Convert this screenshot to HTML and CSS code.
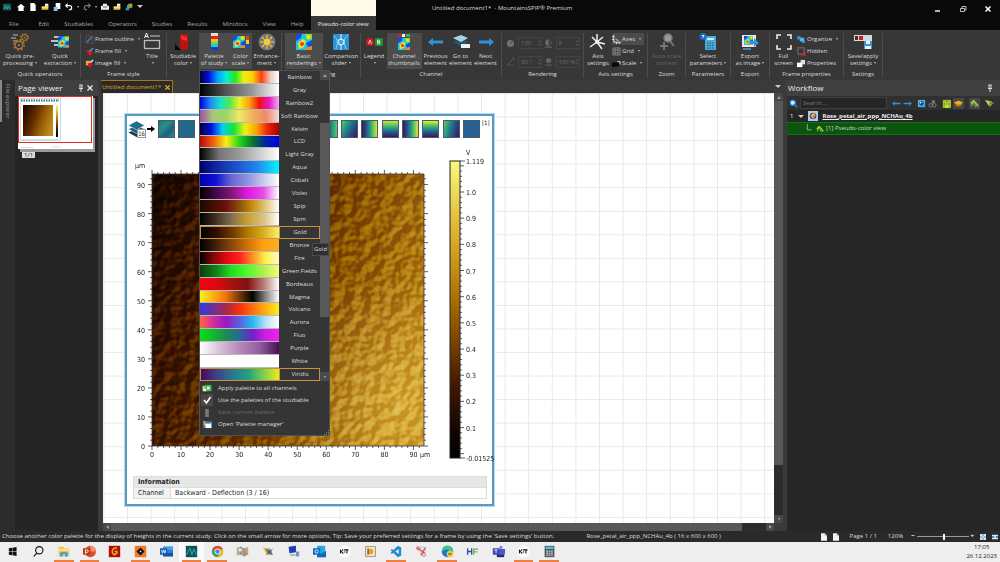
FILE: index.html
```html
<!DOCTYPE html>
<html lang="en">
<head>
<meta charset="utf-8">
<title>Untitled document1* - MountainsSPIP® Premium</title>
<link rel="stylesheet" href="styles.css">
</head>
<body>
<svg class="sprite" aria-hidden="true">
  <symbol id="heat" viewBox="0 0 16 16"><rect width="16" height="16" fill="#19c8e8"/><path d="M0 0h6l-1 4-5 3zM10 9l6-3v6l-4 1z" fill="#1b49e0"/><path d="M2 9l5-4 3 2-2 6-5 2z" fill="#f4e11e"/><path d="M9 0h7v5l-5 1z" fill="#7be03a"/><circle cx="6" cy="10" r="2" fill="#e8391d"/><circle cx="12.500" cy="3" r="2" fill="#f4e11e"/><path d="M10 14l6-2v4h-7z" fill="#f08a1c"/></symbol>
  <symbol id="gear" viewBox="0 0 16 16"><circle cx="8" cy="8" r="5" fill="none" stroke="#b07a28" stroke-width="1.800"/><circle cx="8" cy="8" r="7" fill="none" stroke="#b07a28" stroke-width="2" stroke-dasharray="2.500 3"/><circle cx="8" cy="8" r="1.500" fill="#b07a28"/></symbol>
  <symbol id="folder" viewBox="0 0 12 12"><path d="M1 5h4l1-1h5v6H1z" fill="#e8c440"/><path d="M1 6h10v1H1z" fill="#fff2a8"/><path d="M6 1h5v4H6z" fill="#eee"/></symbol>
  <symbol id="pin" viewBox="0 0 8 8"><path d="M2.500 1h3M3 1v3M5 1v3M2 4.500h4M4 4.500V8" stroke="#ddd" fill="none"/></symbol>
  <symbol id="larr" viewBox="0 0 16 10"><path d="M0 5l5-4v2.500h10v3H5V9z" fill="#2b93e0"/></symbol>
  <symbol id="rarr" viewBox="0 0 16 10"><path d="M16 5l-5-4v2.500H1v3h10V9z" fill="#2b93e0"/></symbol>
  <symbol id="page" viewBox="0 0 8 10"><path d="M0 0h5l3 3v7H0z" fill="#f4f4f4"/><path d="M5 0v3h3z" fill="#999"/></symbol>
  <symbol id="layers" viewBox="0 0 20 20"><path d="M1 14l9-4 9 4-9 5z" fill="#123c58"/><path d="M1 10l9-4 9 4-9 5z" fill="#175a78" stroke="#fff" stroke-width=".6"/><path d="M1 6l9-5 9 5-9 5z" fill="#1f6c88" stroke="#fff" stroke-width=".6"/></symbol>
  <symbol id="lens" viewBox="0 0 12 12"><circle cx="5" cy="5" r="3.500" fill="#d7ecff" stroke="#2b7cc8" stroke-width="1.500"/><path d="M8 8l3 3" stroke="#2b7cc8" stroke-width="2"/></symbol>
  <symbol id="measure" viewBox="0 0 10 10"><path d="M1 5l3-3 2 2 3 4" stroke="#e3d14a" stroke-width="1.500" fill="none"/><path d="M1 8l3-4 3 5" stroke="#58b84d" stroke-width="1.300" fill="none"/></symbol>
  <symbol id="kt" viewBox="0 0 16 16"><circle cx="8" cy="8" r="7.500" fill="#fff"/><path d="M3 5.500v5M4 8l2.500-2.500M4 8l2.500 2.500M7.500 6H13M11 6v4.500M7 8.500h2" stroke="#111" stroke-width="1.300" fill="none"/></symbol>
</svg>

<header class="titlebar">
  <div class="topline">
    <div class="quick">
      <svg viewBox="0 0 12 12"><rect y="1" width="12" height="10" fill="#0c5a5c"/><path d="M1 9l3-5 2 5 2-4 3 4" stroke="#51c6bb" fill="none"/></svg>
      <svg viewBox="0 0 12 12"><path d="M6 1l6 5.500H10V12H2V6.500H0z" fill="#fff"/></svg>
      <svg viewBox="0 0 12 12"><path d="M2 0h5.500L10 2.500V12H2z" fill="#fff"/></svg>
      <svg><use href="#folder"/></svg>
      <svg viewBox="0 0 12 12"><path d="M4 0h7v9H4z" fill="#fff"/><path d="M1 6h6v6H1z" fill="#8fc1e8"/></svg>
      <svg viewBox="0 0 12 12"><path d="M4 1L1 4l3 3M1.500 4H7a3 3 0 010 6H6" stroke="#fff" stroke-width="1.800" fill="none"/></svg>
      <i class="tri"></i>
      <svg viewBox="0 0 12 12"><path d="M8 1l3 3-3 3M10.500 4H5a3 3 0 000 6h1" stroke="#777" stroke-width="1.800" fill="none"/></svg>
      <i class="tri"></i>
      <svg viewBox="0 0 12 12"><path d="M3 1h6v3h3v6H0V4h3z" fill="#eee"/><path d="M3 6h6" stroke="#222"/></svg>
      <svg><use href="#folder"/></svg>
      <svg viewBox="0 0 12 12"><path d="M5 1h6v6H5z" fill="#e88a3c"/><path d="M3 3h6v5H3z" fill="#52b35e"/><path d="M1 7h5v4H1z" fill="#3489d6"/></svg>
      <i class="tri wide"></i>
    </div>
    <h1>Untitled document1* &nbsp;- MountainsSPIP® Premium</h1>
    <div class="winbtns">
      <button aria-label="Minimize"><svg viewBox="0 0 8 8"><path d="M1 6h5" stroke="#eee" stroke-width="1.500"/></svg></button>
      <button aria-label="Restore"><svg viewBox="0 0 8 8"><path d="M1.500 3.500h4v3h-4zM3 3V1.500h4v3.500H6" stroke="#bbb" fill="none"/></svg></button>
      <button aria-label="Close"><svg viewBox="0 0 8 8"><path d="M1.500 1.500l5 5M6.500 1.500l-5 5" stroke="#fff" stroke-width="1.500"/></svg></button>
    </div>
  </div>
  <nav class="tabs">
    <a href="#">File</a><a href="#">Edit</a><a href="#">Studiables</a><a href="#">Operators</a><a href="#">Studies</a><a href="#">Results</a><a href="#">Minidocs</a><a href="#">View</a><a href="#">Help</a><a href="#" class="active">Pseudo-color view</a>
  </nav>
</header>

<section class="ribbon">
  <div class="group"><div class="tools two">
    <button><svg viewBox="0 0 20 18"><path d="M3 2h5M1 5h5M3 8h4" stroke="#bbb"/><svg x="10" y="0" width="9" height="9"><use href="#gear"/></svg><svg x="3" y="6" width="12" height="12"><use href="#gear"/></svg></svg><span>Quick pre-<br>processing<i class="tri"></i></span></button>
    <button><svg viewBox="0 0 20 18"><path d="M4 4h6M1 8h7M4 12h5" stroke="#eee" stroke-width="1.500"/><svg x="8" y="3" width="11" height="12"><use href="#heat"/></svg></svg><span>Quick<br>extraction<i class="tri"></i></span></button>
  </div><h2>Quick operators</h2></div>

  <div class="group"><div class="tools stackbig">
    <div class="stack">
      <button><svg viewBox="0 0 10 10"><rect x="1" y="1" width="8" height="8" fill="none" stroke="#a45a2c" stroke-dasharray="1 1"/><path d="M2 8l6-6" stroke="#3478c0" stroke-width="2"/></svg>Frame outline<i class="tri"></i></button>
      <button><svg viewBox="0 0 10 10"><path d="M1 4l5-1 3 3-4 4z" fill="#d41818"/><path d="M5 5l4-4" stroke="#4b9be0" stroke-width="1.500"/></svg>Frame fill<i class="tri"></i></button>
      <button><svg viewBox="0 0 10 10"><path d="M1 2h5v5H1z" fill="#e0b03c"/><path d="M3 5l4-1 2 2-4 4z" fill="#d41818"/><path d="M6 4l3-3" stroke="#eee" stroke-width="1.500"/></svg>Image fill<i class="tri"></i></button>
    </div>
    <button><svg viewBox="0 0 20 18"><path d="M2.500 5L4.500 0l2 5M3 3.500h3" stroke="#eee" fill="none"/><path d="M8 3h10" stroke="#ccc"/><rect x="2.500" y="7.500" width="15" height="8" fill="none" stroke="#bbb" stroke-width="1.300"/></svg><span>Title<br><i class="tri"></i></span></button>
  </div><h2>Frame style</h2></div>

  <div class="group"><div class="tools four">
    <button><svg viewBox="0 0 20 18"><path d="M7 1h8v15l-4 1-4-2z" fill="#c01010"/><path d="M8 2l6 2v4l-6-2z" fill="#e83232"/><path d="M2 11l6 6H2z" fill="#080808"/></svg><span>Studiable<br>color<i class="tri"></i></span></button>
    <button class="on"><svg viewBox="0 0 20 18"><path d="M7 0h7v3H7z" fill="#f5d8d0"/><path d="M7 3h7v3H7z" fill="#e02818"/><path d="M7 6h7v3H7z" fill="#f4c01c"/><path d="M7 9h7v2H7z" fill="#5ddc4c"/><path d="M7 11h7v3H7z" fill="#20c8e0"/><path d="M7 14h7v3H7z" fill="#1838c8"/></svg><span>Palette<br>of study<i class="tri"></i></span></button>
    <button class="on"><svg viewBox="0 0 20 18"><svg x="2" y="3" width="12" height="12"><use href="#heat"/></svg><path d="M15 3h3v4h-3z" fill="#e83c20"/><path d="M15 7h3v4h-3z" fill="#e8d820"/><path d="M15 11h3v4h-3z" fill="#2048d8"/></svg><span>Color<br>scale<i class="tri"></i></span></button>
    <button><svg viewBox="0 0 20 18"><circle cx="10" cy="9" r="8.500" fill="#777"/><circle cx="10" cy="9" r="3.500" fill="#f5c83c"/><path d="M10 2v3M10 13v3M3 9h3M14 9h3M5 4l2 2M15 4l-2 2M5 14l2-2M15 14l-2-2" stroke="#f5c83c" stroke-width="1.200"/></svg><span>Enhance-<br>ment<i class="tri"></i></span></button>
  </div></div>

  <div class="group"><div class="tools two">
    <button class="on"><svg viewBox="0 0 20 18"><svg x="2" y="1" width="16" height="16"><use href="#heat"/></svg></svg><span>Basic<br>renderings<i class="tri"></i></span></button>
    <button><svg viewBox="0 0 20 18"><rect x="2" y="1" width="16" height="16" fill="#2c90d8"/><path d="M3 3c5 4 3 8 2 13M17 2c-5 3-4 9-2 14" stroke="#8cd8e8" fill="none"/><path d="M10 1v16" stroke="#dff"/><circle cx="10" cy="9" r="3" fill="#4aa8dc" stroke="#dff"/></svg><span>Comparison<br>slider<i class="tri"></i></span></button>
  </div><h2>Rendering</h2></div>

  <div class="group"><div class="tools channel">
    <button><svg viewBox="0 0 20 18"><circle cx="6" cy="9" r="4" fill="#d01c1c"/><rect x="11" y="5" width="8" height="8" fill="#1e8c32"/><path d="M4.500 11L6 7l1.500 4M13.500 7v4h2.500v-2h-2.500h2V7z" stroke="#eee" stroke-width=".8" fill="none"/></svg><span>Legend<br><i class="tri"></i></span></button>
    <button class="on"><svg viewBox="0 0 20 18"><path d="M4 1h3v3H4z" fill="#c02828"/><path d="M8 1h3v3H8z" fill="#eee"/><path d="M12 1h4v3h-4z" fill="#36b04c"/><svg x="4" y="5" width="12" height="12"><use href="#heat"/></svg></svg><span>Channel<br>thumbnails</span></button>
    <div class="inner">
      <button><svg viewBox="0 0 20 18"><svg x="2" y="4" width="16" height="10"><use href="#larr"/></svg></svg><span>Previous<br>element</span></button>
      <button><svg viewBox="0 0 20 18"><path d="M2 9l8-3 8 3-8 5z" fill="#24566e"/><path d="M2 5l8-3 7 3-7 4z" fill="#a9d5e0"/><path d="M10 11h9v4h-9z" fill="#f0f0f0"/></svg><span>Go to<br>element</span></button>
      <button><svg viewBox="0 0 20 18"><svg x="2" y="4" width="16" height="10"><use href="#rarr"/></svg></svg><span>Next<br>element</span></button>
    </div>
  </div><h2>Channel</h2></div>

  <div class="group"><div class="tools spins">
    <label><svg viewBox="0 0 10 10"><circle cx="5" cy="5" r="4" fill="#888"/><path d="M5 5l3-4" stroke="#444"/></svg><input aria-label="Light azimuth" value="130" disabled></label>
    <label><svg viewBox="0 0 10 10"><circle cx="5" cy="4" r="3.500" fill="#888"/><path d="M5 .5a3.500 3.500 0 010 7z" fill="#444"/><path d="M1 9h8" stroke="#888"/></svg><input aria-label="Contrast" value="8" disabled></label>
    <label><svg viewBox="0 0 10 10"><path d="M1 9h8M1 9l6-6" stroke="#666" fill="none"/><circle cx="8" cy="2" r="1" fill="#777"/></svg><input aria-label="Light elevation" value="30 °" disabled></label>
    <label><svg viewBox="0 0 10 10"><circle cx="5" cy="4" r="3" fill="#777"/><path d="M1 9h8" stroke="#777"/></svg><input aria-label="Intensity" value="100 %" disabled></label>
  </div><h2>Rendering</h2></div>

  <div class="group"><div class="tools axis">
    <button><svg viewBox="0 0 20 18"><path d="M9 9V1M9 9l8 2M9 9l-7 5M9 9L4 4M9 9l5 7M9 9l6-5" stroke="#eee" stroke-width="1.500"/><circle cx="9" cy="9" r="2" fill="#eee"/></svg><span>Axis<br>settings</span></button>
    <div class="stack">
      <button class="on"><svg viewBox="0 0 10 10"><path d="M2 0v8h8" stroke="#eee" fill="none"/><path d="M0 2h2M0 5h2M5 8v2M8 8v2M4 5l3 1" stroke="#eee"/></svg>Axes<i class="tri"></i></button>
      <button><svg viewBox="0 0 10 10"><path d="M1 1h8v8H1zM1 3.500h8M1 6.500h8M3.500 1v8M6.500 1v8" stroke="#999" stroke-width=".8" fill="none"/></svg>Grid<i class="tri"></i></button>
      <button><svg viewBox="0 0 10 10"><path d="M0 4h8v4l-8 1z" fill="#090909"/><path d="M6 3h3v3" stroke="#eee" fill="none"/></svg>Scale<i class="tri"></i></button>
    </div>
  </div><h2>Axis settings</h2></div>

  <div class="group"><div class="tools one">
    <button disabled><svg viewBox="0 0 20 18"><circle cx="11" cy="5" r="4" fill="#999" stroke="#777" stroke-width="1.500"/><path d="M13 8l4 5" stroke="#777" stroke-width="2"/><path d="M7 9v8M3 13h8" stroke="#888" stroke-width="1.500"/></svg><span>Auto-scale<br>content</span></button>
  </div><h2>Zoom</h2></div>

  <div class="group"><div class="tools one">
    <button><svg viewBox="0 0 20 18"><rect x="7" y="3" width="11" height="14" fill="#4ba9d8"/><path d="M9 5h7v2H9z" fill="#d6f0fa"/><path d="M9 10h7M9 12.500h7M9 15h7" stroke="#14557c" stroke-dasharray="1.500 1"/><circle cx="5" cy="3.500" r="3.500" fill="#1b6fd0"/><path d="M4 2.500h2l-1 2" stroke="#fff" fill="none"/></svg><span>Select<br>parameters<i class="tri"></i></span></button>
  </div><h2>Parameters</h2></div>

  <div class="group"><div class="tools one">
    <button><svg viewBox="0 0 20 18"><rect x="2" y="2" width="14" height="12" fill="#e8e8e8"/><svg x="3" y="3" width="11" height="9"><use href="#heat"/></svg><path d="M10 8h4V5l5 5-5 4v-3h-4z" fill="#2f94de"/><path d="M3 16h8" stroke="#4aa0d8" stroke-width="1.500"/></svg><span>Export<br>as image<i class="tri"></i></span></button>
  </div><h2>Export</h2></div>

  <div class="group"><div class="tools fp">
    <button><svg viewBox="0 0 20 18"><path d="M3 6V2h4M13 2h4v4M17 12v4h-4M7 16H3v-4" stroke="#eee" stroke-width="1.600" fill="none"/></svg><span>Full<br>screen</span></button>
    <div class="stack">
      <button><svg viewBox="0 0 10 10"><path d="M0 1h4v4H0zM5 6h4v3H5z" fill="#2a86d4"/><path d="M3 3h5v4H3z" fill="#57b5ea"/></svg>Organize<i class="tri"></i></button>
      <button><svg viewBox="0 0 10 10"><rect x="1" y="1" width="7" height="7" fill="none" stroke="#bbb" stroke-dasharray="1 1"/><path d="M6 6l4 4M10 6l-4 4" stroke="#d82020" stroke-width="1.300"/></svg>Hidden</button>
      <button><svg viewBox="0 0 10 10"><path d="M4 1h5v5H4z" fill="#ddd"/><path d="M0 4h6v5H0z" fill="#fff"/></svg>Properties</button>
    </div>
  </div><h2>Frame properties</h2></div>

  <div class="group"><div class="tools one">
    <button><svg viewBox="0 0 20 18"><rect x="1" y="2" width="18" height="6" fill="#d8d8d8"/><path d="M2 3h3v4H2z" fill="#333"/><path d="M6 3h4v4H6z" fill="#d81818"/><rect x="11" y="8" width="8" height="8" fill="#3a94d8"/><path d="M13 8h4v3h-4zM12 13h6v3h-6z" fill="#e8f4fc"/></svg><span>Save/apply<br>settings<i class="tri"></i></span></button>
  </div><h2>Settings</h2></div>
</section>

<main class="workspace">
  <aside class="explorer"><button>File explorer</button></aside>

  <section class="viewer">
    <div class="panelhead"><h2>Page viewer</h2><button aria-label="Pin"><svg><use href="#pin"/></svg></button><button aria-label="Close"><svg viewBox="0 0 8 8"><path d="M1.500 1.500l5 5M6.500 1.500l-5 5" stroke="#eee" stroke-width="1.300"/></svg></button></div>
    <div class="minipage">
      <svg viewBox="0 0 77 56">
        <rect x="2" y="2" width="75" height="54" fill="#9a9a9a"/><rect width="75" height="53" fill="#fff"/>
        <rect x="2.500" y="2.500" width="40" height="42" fill="none" stroke="#c4dce8"/>
        <path d="M3 4.500h38" stroke="#2a6f80" stroke-width="2" stroke-dasharray="1.500 1"/>
        <rect x="5" y="9" width="30" height="31" fill="url(#gold)"/><rect x="38" y="9" width="2" height="32" fill="url(#goldbar)"/>
        <path d="M4 43.500h36M3 51.500h12M34 51h8" stroke="#ccc" stroke-width=".7"/>
        <rect x=".5" y=".5" width="73" height="46" fill="none" stroke="#e02c20"/>
      </svg>
      <span>1/1</span>
    </div>
  </section>

  <section class="document">
    <div class="doctabs"><a href="#">Untitled document1*<svg viewBox="0 0 8 8"><path d="M1.500 1.500l5 5M6.500 1.500l-5 5" stroke="#f0b428" stroke-width="1.400"/></svg></a><i class="tri wide"></i></div>
    <div class="canvas">
      <svg class="gridlines"><defs><pattern id="grid" x="24" y="0" width="23.600" height="23.550" patternUnits="userSpaceOnUse"><path d="M0 .5h24M.5 0v24" stroke="#e9e9ea" fill="none"/></pattern></defs><rect width="100%" height="100%" fill="url(#grid)"/></svg>
      <article class="frame">
        <div class="thumbs">
          <div class="stackicon"><svg><use href="#layers"/></svg><b>16</b></div>
          <svg class="arrow" viewBox="0 0 8 6"><path d="M0 2h4V0l4 3-4 3V4H0z" fill="#000"/></svg>
          <div class="strip" id="strip"></div>
          <span>[1]</span>
        </div>
        <svg class="plot" id="plot" viewBox="0 0 363 335">
          <defs>
            <linearGradient id="gold" x1="0" y1="0.200" x2="1" y2="0.550"><stop offset="0" stop-color="#200a00"/><stop offset=".18" stop-color="#401600"/><stop offset=".42" stop-color="#642f00"/><stop offset=".66" stop-color="#925a02"/><stop offset="1" stop-color="#c08a18"/></linearGradient>
            <linearGradient id="goldbar" x1="0" y1="0" x2="0" y2="1"><stop offset="0" stop-color="#faf87c"/><stop offset=".25" stop-color="#dcb02c"/><stop offset=".45" stop-color="#b07404"/><stop offset=".62" stop-color="#784000"/><stop offset=".75" stop-color="#451800"/><stop offset=".9" stop-color="#140600"/><stop offset="1" stop-color="#000"/></linearGradient>
            <radialGradient id="glow" cx=".92" cy=".85" r=".5"><stop offset="0" stop-color="#f4d860" stop-opacity=".5"/><stop offset="1" stop-color="#f4d860" stop-opacity="0"/></radialGradient>
            <filter id="petals" x="0" y="0" width="1" height="1" color-interpolation-filters="sRGB"><feTurbulence type="fractalNoise" baseFrequency=".1" numOctaves="2" seed="4" result="n"/><feDiffuseLighting in="n" surfaceScale="5" lighting-color="#fff"><feDistantLight azimuth="225" elevation="40"/></feDiffuseLighting><feColorMatrix values="1.500 0 0 0 -.5  0 1.500 0 0 -.5  0 0 1.500 0 -.5  0 0 0 1 0"/></filter>
          </defs>
          <rect x="24" y="35" width="272" height="272" fill="url(#gold)"/>
          <rect x="24" y="35" width="272" height="272" fill="url(#glow)"/>
          <rect class="texture" x="24" y="35" width="272" height="272" filter="url(#petals)"/>
          <rect x="322" y="22" width="10" height="297" fill="url(#goldbar)" stroke="#222"/>
          <g id="axes"></g>
          <text x="7" y="29">µm</text><text x="338" y="16">V</text>
        </svg>
        <table class="info">
          <thead><tr><th colspan="2">Information</th></tr></thead>
          <tbody><tr><th scope="row">Channel</th><td>Backward - Deflection (3 / 16)</td></tr></tbody>
        </table>
      </article>
    </div>
    <div class="vscroll"><button aria-label="Scroll up"><i class="tri up"></i></button><div class="thumb"></div><div class="track"></div><button aria-label="Scroll down"><i class="tri"></i></button></div>
    <div class="hscroll"><button aria-label="Scroll left"><i class="tri left"></i></button><div class="thumb"></div><div class="track"></div><button aria-label="Scroll right"><i class="tri right"></i></button></div>
  </section>

  <section class="workflow">
    <div class="panelhead"><h2>Workflow</h2><button aria-label="Pin"><svg><use href="#pin"/></svg></button></div>
    <div class="searchrow">
      <svg><use href="#lens"/></svg>
      <input type="search" aria-label="Search" placeholder="Search...">
      <button aria-label="Back"><svg><use href="#larr"/></svg></button>
      <button aria-label="Forward"><svg><use href="#rarr"/></svg></button>
      <button class="gap" aria-label="Study"><svg viewBox="0 0 10 10"><rect x="1" y="1" width="8" height="8" fill="#4aaae4"/><circle cx="5" cy="5" r="2.500" fill="#174f86"/><circle cx="4" cy="4" r="1" fill="#eee"/></svg></button>
      <button aria-label="Group"><svg viewBox="0 0 10 10"><circle cx="3" cy="7" r="2" fill="none" stroke="#888"/><circle cx="7" cy="7" r="2" fill="none" stroke="#888"/><circle cx="6" cy="3" r="2" fill="#777"/></svg></button>
      <button class="gap" aria-label="Studiables"><svg viewBox="0 0 10 10"><rect x="1" y="1" width="9" height="9" fill="#f0e020"/><path d="M1 1h3v3H1zM7 1h3v3H7zM4 4h3v3H4zM1 7h3v3H1zM7 7h3v3H7z" fill="#60d040"/><circle cx="5.500" cy="2.500" r="1" fill="#e03820"/><circle cx="2.500" cy="5.500" r="1" fill="#e03820"/><circle cx="8.500" cy="5.500" r="1" fill="#e03820"/></svg></button>
      <button aria-label="Layers" class="on"><svg viewBox="0 0 10 10"><path d="M0 4l5-2 5 2-3 4H3z" fill="#c88410"/><path d="M0 4l5-2 5 2-5 2z" fill="#f0b028"/></svg></button>
      <button aria-label="Measures" class="gap on"><svg><use href="#measure"/></svg></button>
      <button aria-label="Filter" class="gap"><svg viewBox="0 0 10 10"><path d="M0 1l8 2-3 3v3z" fill="#e4cc40"/><path d="M4 3l5 1-3 5z" fill="#58b04a"/><path d="M6 5h4" stroke="#d84830"/></svg></button>
    </div>
    <a class="noderow" href="#"><span>1</span><i class="tri wide"></i><svg viewBox="0 0 12 12"><rect width="12" height="12" fill="#a8d0f0"/><circle cx="6" cy="6" r="4" fill="#803088"/><path d="M3 5l4-3 2 3-3 5z" fill="#e0b828"/><path d="M6 7l3-2-1 4z" fill="#2c9c44"/></svg><b>Rose_petal_air_ppp_NCHAu_4b</b></a>
    <a class="noderow child" href="#"><svg viewBox="0 0 12 12"><path d="M4 0v7h5" stroke="#9c9" fill="none"/></svg><svg class="small"><use href="#measure"/></svg><span>[1] Pseudo-color view</span></a>
  </section>
</main>

<footer class="status">
  <p>Choose another color palette for the display of heights in the current study. Click on the small arrow for more options. Tip: Save your preferred settings for a frame by using the 'Save settings' button.</p>
  <p class="file">Rose_petal_air_ppp_NCHAu_4b ( 16 x 600 x 600 )</p>
  <div class="zoomer">
    <svg><use href="#page"/></svg><svg><use href="#page"/></svg>
    <span>Page 1 / 1</span><span>120%</span>
    <div class="slider"><button aria-label="Zoom out">−</button><input type="range" aria-label="Zoom" value="52"><button aria-label="Zoom in">+</button></div>
    <svg viewBox="0 0 8 8"><rect width="8" height="8" fill="#dceaf4"/><path d="M4 0v3M4 5v3M0 4h3M5 4h3" stroke="#1c68a8"/></svg>
    <svg viewBox="0 0 8 8"><rect y="1" width="8" height="6" fill="#dceaf4"/><path d="M0 4h3M5 4h3" stroke="#1c68a8" stroke-width="2"/></svg>
  </div>
</footer>

<footer class="taskbar">
  <div class="apps">
    <button aria-label="Start"><svg viewBox="0 0 16 16"><path d="M3.500 4l4-.6v4.300h-4zM8 3.300l5-.8v5.200H8zM3.500 8.300h4v4.300l-4-.6zM8 8.300h5v5.200l-5-.8z" fill="#111"/></svg></button>
    <button aria-label="Search"><svg viewBox="0 0 16 16"><circle cx="9" cy="6.500" r="4.500" fill="none" stroke="#111" stroke-width="1.400"/><path d="M6 10l-4 4" stroke="#111" stroke-width="1.600"/></svg></button>
    <button class="open" aria-label="Explorer"><svg viewBox="0 0 16 16"><path d="M2 2h6l1 2h6v10H2z" fill="#f0c850"/><path d="M4 14V9h9v5h-3v-3H7v3z" fill="#3c98dc"/><path d="M2 5h13v2H2z" fill="#fbe59c"/></svg></button>
    <button class="open" aria-label="PowerPoint"><svg viewBox="0 0 16 16"><circle cx="9" cy="8" r="7" fill="#d8502c"/><path d="M9 1a7 7 0 017 7H9z" fill="#f4906c"/><rect y="4" width="9" height="8" fill="#b83818"/><path d="M3 11V6h2a1.500 1.500 0 010 3H3" stroke="#fff" fill="none"/></svg></button>
    <button aria-label="Gwyddion"><svg viewBox="0 0 16 16"><rect x="1" y="1" width="14" height="14" fill="#a81008"/><path d="M11 4a4 4 0 10-3 8l3-2V8H8" stroke="#f0a028" stroke-width="2" fill="none"/></svg></button>
    <button class="open" aria-label="Nanosurf"><svg viewBox="0 0 16 16"><rect x="1" y="1" width="14" height="14" fill="#f47820"/><path d="M8 3l5 5-5 5-5-5z" fill="#151515"/><circle cx="8" cy="8" r="1" fill="#fff"/></svg></button>
    <button aria-label="Word"><svg viewBox="0 0 16 16"><path d="M4 2h12v12H4z" fill="#2b7cd3"/><path d="M4 2h12v4H4z" fill="#41a5ee"/><path d="M4 10h12v4H4z" fill="#164f9c"/><rect y="4" width="9" height="8" fill="#185abd"/><path d="M2 6l1 4 1.500-4L6 10l1-4" stroke="#fff" fill="none"/></svg></button>
    <button class="open current" aria-label="Mountains"><svg viewBox="0 0 16 16"><rect x="1" y="1" width="14" height="14" fill="#0b5558"/><path d="M2 12l4-8 3 8M8 12l3-7 3 7" stroke="#48b8a8" fill="none"/></svg></button>
    <button class="open" aria-label="Chrome"><svg viewBox="0 0 16 16"><circle cx="8" cy="8" r="7" fill="#34a853"/><path d="M2 4.500a7 7 0 0112.500 1H8L5.500 9z" fill="#ea4335"/><path d="M14.500 5.500A7 7 0 018 15l3-6-2-3.500z" fill="#fbbc04"/><circle cx="8" cy="8" r="3.200" fill="#4285f4" stroke="#fff"/></svg></button>
    <button aria-label="Maps"><svg viewBox="0 0 16 16"><path d="M1 3l5-1 4 2 5-2v10l-5 2-4-2-5 1z" fill="#b4ac8c"/><path d="M6 2v10M10 4v10" stroke="#657880"/><path d="M9 6l5 6" stroke="#d8803c" stroke-width="1.500"/><circle cx="5" cy="6" r="2" fill="#e8f0f4"/></svg></button>
    <button aria-label="Editor"><svg viewBox="0 0 16 16"><path d="M1 3l9 1 4 9-8-1z" fill="#e8c030"/><path d="M4 5l7 1 2 6-5-1z" fill="#4d78ac"/><path d="M5 12l8-7" stroke="#444"/></svg></button>
    <button aria-label="Remote desktop"><svg viewBox="0 0 16 16"><path d="M2 2l9-1v8l-8 1z" fill="#1c3cb8"/><path d="M3 11h7l2 2-7 1z" fill="#b8b8b8"/><path d="M11 8h4v6h-4z" fill="#7c92b8"/></svg></button>
    <button aria-label="Outlook"><svg viewBox="0 0 16 16"><path d="M5 1h10v14H5z" fill="#28a8ea"/><path d="M5 8l5 3 6-4v8H5z" fill="#1468b4"/><rect y="4" width="9" height="8" fill="#0f6cbd"/><circle cx="4.500" cy="8" r="2" fill="none" stroke="#fff"/></svg></button>
    <button aria-label="KT"><svg><use href="#kt"/></svg></button>
    <button aria-label="Camera"><svg viewBox="0 0 16 16"><rect x="2" y="2" width="12" height="12" fill="#f4e6c4" stroke="#98846c"/><circle cx="8" cy="8" r="3.500" fill="#e8a030"/><path d="M5 4v8" stroke="#5c5044" stroke-width="1.500"/></svg></button>
    <button class="open" aria-label="VS Code"><svg viewBox="0 0 16 16"><path d="M11 1l4 2v10l-4 2-9-8.500L3.500 5 12 11V5L3.500 11 2 9.500z" fill="#1f8ad2"/></svg></button>
    <button aria-label="Snipping tool"><svg viewBox="0 0 16 16"><circle cx="9" cy="6" r="5" fill="#dcdcdc"/><path d="M2 3l10 7M13 3L7 13" stroke="#c05048" stroke-width="1.400"/><circle cx="4" cy="4" r="2" fill="none" stroke="#d86058"/><circle cx="11" cy="12" r="2" fill="none" stroke="#d86058"/></svg></button>
    <button class="open" aria-label="Edge"><svg viewBox="0 0 16 16"><circle cx="8" cy="8" r="7" fill="#1878c8"/><path d="M1 8a7 7 0 0114-1c0 3-4 3-5 2 1-4-5-5-9-1z" fill="#3cc48c"/><circle cx="11" cy="11" r="4" fill="#f0c848"/><path d="M9 11h4" stroke="#222"/></svg></button>
    <button aria-label="HF"><svg viewBox="0 0 16 16"><path d="M2 4v8M2 8h5M7 4v8" stroke="#2c4cb0" stroke-width="1.600" fill="none"/><path d="M9.500 12V5H15M9.500 8.500H14" stroke="#68b848" stroke-width="1.600" fill="none"/></svg></button>
    <button aria-label="Teams"><svg viewBox="0 0 16 16"><circle cx="11" cy="3" r="2" fill="#7b83eb"/><path d="M6 5h10v6l-3 3H6z" fill="#5059c9"/><rect x="1" y="4" width="8" height="8" fill="#3c45b0"/><path d="M3 6h4M5 6v4" stroke="#fff"/><path d="M6 12h9v3H6z" fill="#202878"/></svg></button>
    <button class="open" aria-label="KT window"><svg><use href="#kt"/></svg></button>
    <button class="open" aria-label="Calculator"><svg viewBox="0 0 16 16"><rect x="2" y="1" width="12" height="14" fill="#4c5660"/><path d="M3 2h10v3H3z" fill="#50c0e0"/><path d="M4 7.500h8M4 10h8M4 12.500h8" stroke="#d8dce0" stroke-width="1.500" stroke-dasharray="2 1"/></svg></button>
  </div>
  <time>17:05<br>26.12.2023</time>
</footer>

<div class="palette">
  <div class="listwrap">
    <div class="list" id="palettes"></div>
    <div class="vbar"><button aria-label="Scroll list up"><i class="tri up"></i></button><div></div><button aria-label="Scroll list down"><i class="tri"></i></button></div>
  </div>
  <div class="menu">
    <button><svg viewBox="0 0 12 10"><path d="M1 2h6v6H1z" fill="#b8d848"/><path d="M4 1h7v7H4z" fill="#3cb464"/><path d="M6 3h3v3H6zM2 5h3v3H2z" fill="#eee"/></svg>Apply palette to all channels</button>
    <button><svg class="check" viewBox="0 0 12 12"><path d="M3 6l2.500 3L9.500 3" stroke="#fff" stroke-width="1.600" fill="none"/></svg>Use the palettes of the studiable</button>
    <button disabled><svg viewBox="0 0 12 10"><path d="M4 1h4v9H4z" fill="#777"/></svg>Save current palette</button>
    <button><svg viewBox="0 0 12 10"><path d="M2 1h2v8H2z" fill="#e8b020"/><path d="M4 2h7v7H4z" fill="#fff"/><path d="M4 2h7v2H4z" fill="#2c84c8"/><path d="M2 6h2v3H2z" fill="#2c64d8"/></svg>Open 'Palette manager'</button>
    <svg class="grip" viewBox="0 0 5 5"><path d="M4 0h1v1H4zM4 2h1v1H4zM2 2h1v1H2zM4 4h1v1H4zM2 4h1v1H2zM0 4h1v1H0z" fill="#888"/></svg>
  </div>
  <span class="tip" role="tooltip">Gold</span>
</div>
<script src="app.js"></script>
</body>
</html>
```
FILE: styles.css
```css
* { box-sizing: border-box; margin: 0; padding: 0; }
body {
  height: 100vh;
  display: flex;
  flex-direction: column;
  overflow: hidden;
  background: #262626;
  color: #dcdcdc;
  font: 6px/7px "Open Sans", "Noto Sans", sans-serif;
}
button, input { font: inherit; color: inherit; background: none; border: 0; }
a { color: inherit; text-decoration: none; }
h1, h2 { font: inherit; }
svg { display: block; flex: none; }
.sprite { position: absolute; width: 0; height: 0; }

.tri {
  display: inline-block;
  flex: none;
  width: 0;
  height: 0;
  margin-left: 2px;
  vertical-align: 1px;
  border: 1px solid transparent;
  border-top: 2px solid #bbb;
  border-bottom: 0;
}
.tri.wide { border-width: 2px 3px 0; border-top: 3px solid #ccc; }
.tri.up { border-width: 0 2px 3px; border-bottom: 3px solid #999; }
.tri.left { border-width: 2px 3px 2px 0; border-top-color: transparent; border-right: 3px solid #999; border-bottom: 2px solid transparent; }
.tri.right { border-width: 2px 0 2px 3px; border-top-color: transparent; border-left: 3px solid #999; border-bottom: 2px solid transparent; }

/* title bar */
.titlebar { flex: none; background: #090909; position: relative; }
.topline { display: flex; align-items: center; height: 16px; }
.quick { display: flex; align-items: center; gap: 4px; padding: 0 0 3px 3px; width: 432px; }
.quick svg { width: 8px; height: 8px; }
.quick .tri { margin: 0; }
.quick svg:first-child { margin-right: 2px; }
.topline h1 { flex: 1; padding-top: 1px; }
.winbtns { display: flex; gap: 17px; padding: 1px 8px 0 0; }
.winbtns svg { width: 8px; height: 8px; }
.tabs { display: flex; height: 14px; padding-left: 1px; }
.tabs a { padding: 5px 7px 0 8px; color: #a8a8a8; }
.tabs a:first-child { padding-right: 12px; }
.tabs .active { position: relative; padding: 5px 7px 0; background: #373737; color: #eee; }
.tabs .active::before {
  content: "";
  position: absolute;
  left: 0;
  right: 0;
  bottom: 100%;
  height: 16px;
  background: #fffaea;
  border-top: 2px solid #f29008;
}

/* ribbon */
.ribbon {
  flex: none;
  display: grid;
  grid-template-columns: 81px 86px 115px 79px 141px 82px 64px 38px 45px 39px 74px 39px;
  height: 50px;
  padding: 3px 0 2px;
  background: #373737;
}
.group { display: flex; flex-direction: column; justify-content: space-between; border-right: 1px solid #4c4c4c; }
.group h2 { text-align: center; line-height: 8px; white-space: nowrap; }
.tools { display: grid; height: 36px; }
.tools button { text-align: center; white-space: nowrap; min-width: 0; display: flex; flex-direction: column; align-items: center; gap: 2px; }
.tools button > svg { width: 20px; height: 18px; }
.tools button.on { background: #4c4c4c; }
.tools button:disabled { color: #666; }
.two { grid-template-columns: 1fr 1fr; }
.group:nth-child(4) .two { padding-left: 3px; }
.four { grid-template-columns: 32px 30px 23px 1fr; }
.stackbig { grid-template-columns: 1fr 28px; padding: 0 0 0 4px; }
.channel { grid-template-columns: 26px 34px 1fr; }
.inner { display: grid; grid-template-columns: repeat(3, 25px); border-left: 1px solid #4c4c4c; padding-left: 1px; }
.axis { grid-template-columns: 28px 1fr; }
.fp { grid-template-columns: 27px 1fr; }
.stack { display: grid; grid-template-rows: repeat(3, 12px); justify-content: start; }
.tools .stack button { flex-direction: row; gap: 1px; padding: 0 2px 0 0; }
.tools .stack button > svg { width: 9px; height: 9px; }
.tools .stack .tri { margin-left: 3px; }
.spins { grid-template-columns: 1fr 1fr; padding: 3px 2px 0 4px; row-gap: 4px; }
.spins label { display: flex; align-items: center; gap: 3px; }
.spins svg { width: 9px; height: 9px; opacity: .7; }
.spins input { width: 24px; height: 12px; border: 1px solid #444; padding-left: 2px; color: #707070; }
.spins label::after {
  content: "";
  width: 3px;
  height: 6px;
  margin-left: -7px;
  background: #555;
  clip-path: polygon(50% 0, 100% 33%, 0 33%, 0 67%, 100% 67%, 50% 100%, 0 67%, 0 33%);
}

/* workspace */
.workspace { flex: 1; min-height: 0; display: grid; grid-template-columns: 15px 83px 688px 1fr; background: #303030; }
.explorer { background: #2c2c2c; border-left: 2px solid #777; border-image: linear-gradient(#888 43px, transparent 43px) 1; }
.explorer button { writing-mode: vertical-rl; padding: 4px 2px; color: #999; }
.panelhead { display: flex; align-items: center; height: 16px; padding: 1px 3px; background: #404040; }
.panelhead h2 { flex: 1; font-size: 8px; line-height: 10px; color: #eee; }
.panelhead svg { width: 8px; height: 8px; }
.viewer { background: #252525; }
.viewer .panelhead button { margin-right: 1px; }
.minipage { padding-left: 3px; }
.minipage svg { width: 77px; height: 56px; }
.minipage span { display: inline-block; margin: -3px 0 0 4px; padding: 0 2px; background: #ddd; color: #222; position: relative; line-height: 6px; }

.document { display: grid; grid-template: 13px 1fr 8px / 1fr 9px; padding: 0 3px 0 5px; background: #3a3a3a; min-height: 0; }
.doctabs { grid-column: 1 / -1; display: flex; justify-content: space-between; align-items: center; }
.doctabs a { display: flex; align-items: center; align-self: stretch; gap: 3px; margin-left: -2px; padding: 0 1px; color: #e0a828; border: 1px solid #a87818; border-width: 1px 1px 0 0; background: #2a2a2a; }
.doctabs svg { width: 7px; height: 7px; }
.doctabs .tri { margin-right: 2px; }
.canvas { position: relative; overflow: hidden; background: #fff; }
.gridlines { width: 100%; height: 100%; }
.frame {
  position: absolute;
  left: 22px;
  top: 21px;
  width: 369px;
  padding: 3px 0 5px;
  background: #fff;
  border: 2px solid #5b9ac0;
  outline: 1px solid #b4d8ee;
  color: #222;
  font: 7px/9px "DejaVu Sans Condensed", "DejaVu Sans", sans-serif;
}
.thumbs { display: flex; align-items: center; height: 20px; }
.stackicon { position: relative; width: 19px; }
.stackicon svg { width: 19px; height: 18px; }
.stackicon b { position: absolute; right: 0; bottom: 0; background: #fff; border: 1px solid #999; font-weight: normal; font-size: 6px; line-height: 7px; }
.arrow { width: 8px; height: 6px; margin: 0 3px 0 1px; }
.strip { display: flex; justify-content: space-between; width: 322px; }
.strip i { width: 17px; height: 18px; border: 1px solid #4a5a68; }
.thumbs span { align-self: flex-start; margin-left: 2px; font-size: 6px; line-height: 7px; }
.plot { width: 365px; height: 335px; overflow: visible; isolation: isolate; }
.plot text { font-size: 7px; fill: #222; }
.texture { mix-blend-mode: soft-light; opacity: .5; }
.info { width: 354px; margin: 2px 0 0 6px; border-collapse: collapse; text-align: left; border: 1px solid #cfcfcf; }
.info th, .info td { height: 11px; padding: 0 4px; line-height: 9px; border: 1px solid #dcdcdc; }
.info thead th { background: #e6e7e7; }
.info tbody th { width: 37px; background: #f2f2f2; font-weight: normal; }

.vscroll { display: grid; grid-template-rows: 8px 1fr 50px 8px; background: #2c2c2c; }
.hscroll { display: grid; grid-template-columns: 8px 1fr 24px 8px; background: #2c2c2c; }
.vscroll button, .hscroll button { display: grid; place-items: center; background: #484848; }
.vscroll .tri, .hscroll .tri { margin: 0; }
.thumb { background: #585858; }

.workflow { background: #262626; border-left: 1px solid #3e3e3e; }
.workflow .panelhead { padding: 0 6px 0 1px; }
.searchrow { display: flex; align-items: center; height: 14px; gap: 2px; padding: 0 6px 0 2px; background: #303030; }
.searchrow svg { width: 9px; height: 9px; }
.searchrow input { flex: 1; min-width: 0; height: 12px; padding: 0 2px; background: #262626; border: 1px solid #3e3e3e; outline: 0; }
.searchrow input::placeholder { color: #777; }
.searchrow input + button { margin-left: 3px; }
.searchrow button { padding: 1px 0; }
.searchrow .gap { margin-left: 3px; }
.searchrow .on { padding: 1px; background: #484848; }
.noderow { display: flex; align-items: center; gap: 4px; height: 12px; padding-left: 3px; color: #eee; }
.noderow svg { width: 10px; height: 10px; }
.noderow .small { width: 8px; height: 8px; }
.noderow b { text-decoration: underline; }
.noderow .tri { margin: 0 0 0 1px; }
.noderow.child { height: 13px; gap: 2px; padding-left: 17px; background: #0a560c; border: 1px solid #187018; border-width: 1px 0; color: #cfd8cf; }

/* status bar */
.status { flex: none; display: flex; align-items: center; height: 11px; padding: 0 2px; background: #2a2a2a; white-space: nowrap; }
.status .file { margin-left: 32px; }
.zoomer { display: flex; align-items: center; gap: 6px; margin-left: auto; }
.zoomer svg { width: 6px; height: 8px; }
.zoomer span { margin-left: 5px; }
.slider { display: flex; align-items: center; gap: 2px; margin-left: 2px; }
.slider button { font-weight: 700; color: #fff; }
.slider input { appearance: none; width: 52px; height: 8px; background: linear-gradient(#999, #999) center / 100% 1px no-repeat; }
.slider input::-webkit-slider-thumb { appearance: none; width: 2px; height: 6px; background: #fff; }

/* taskbar */
.taskbar { flex: none; display: flex; justify-content: space-between; height: 20px; background: #eee; color: #222; }
.apps { display: flex; width: 562px; }
.apps button { flex: 1; display: grid; place-items: center; padding: 0 0 2px; position: relative; }
.apps svg { width: 13px; height: 13px; }
.apps .open::after { content: ""; position: absolute; left: 3px; right: 3px; bottom: 0; height: 2px; background: #f08040; }
.apps .current { background: #fafafa; }
.taskbar time { padding: 1px 3px 0 0; text-align: center; line-height: 9px; }

/* palette drop-down */
.palette { position: absolute; left: 199px; top: 70px; width: 131px; background: #353535; border: 1px solid #505050; color: #ddd; }
.listwrap { display: grid; grid-template-columns: 1fr 9px; height: 310px; }
.list { display: grid; }
.list button { display: grid; grid-template-columns: 79px 1fr; align-items: stretch; min-height: 0; }
.list i { border-bottom: 1px solid #b8b8b8; }
.list span { place-self: center; white-space: nowrap; }
.list .picked { outline: 1px solid #c8923c; outline-offset: -1px; }
.list .picked i { margin: 1px 0 0 1px; border-bottom-color: #c8923c; }
.list .picked span { place-self: stretch; display: grid; place-items: center; border-left: 1px solid #c8923c; }
.vbar { display: grid; grid-template-rows: 9px 1fr 9px; }
.vbar button { display: grid; place-items: center; background: #4a4a4a; }
.vbar .tri { margin: 0; }
.vbar div { margin: 43px 0 55px; background: #595959; }
.menu { display: grid; grid-template-rows: repeat(4, 12px) 5px; padding-top: 1px; }
.menu button { display: flex; align-items: center; gap: 5px; padding-left: 1px; }
.menu button:disabled { color: #6a6a6a; }
.menu svg { width: 12px; height: 9px; }
.menu .check { height: 12px; background: #484848; }
.menu .grip { width: 5px; height: 5px; justify-self: end; }
.tip { position: absolute; left: 112px; top: 172px; padding: 2px 1px; background: #2f2f2f; border: 1px solid #484848; }
```
FILE: app.js
```js
const palettes = [
  ["Rainbow", "#000040,#0010e0,#00a0ff,#00f0d0,#20e820,#f0f010,#ffd000,#ff4010,#f0c8c0,#fff"],
  ["Gray", "#000,#555,#999,#fff"],
  ["Rainbow2", "#0000e0,#2080f0,#10e0d0,#50e850,#f0f020,#ffa010,#f01010,#e818c0,#f0b0f0"],
  ["Soft Rainbow", "#a050a8,#a8c878,#98d868,#f0e868,#f0b060,#f08868,#f0dcd8"],
  ["Kelvin", "#000038,#0010e0,#00d0f8,#10e830,#f0f010,#ffa000,#f02008,#a80000"],
  ["LCD", "#b80808,#f06010,#f8f010,#20d818,#087828,#0020a8,#0000e0"],
  ["Light Gray", "#000,#777,#999,#ccc,#fff"],
  ["Aqua", "#000070,#1030a8,#2058d0,#2090f0,#00f8ff"],
  ["Cobalt", "#0000b0,#1010d8,#6868d0,#9090e0,#c8c8ec,#fff"],
  ["Violet", "#000,#400848,#801878,#e018e0,#e848e8,#fff"],
  ["Spip", "#1c0800,#401000,#701010,#885008,#c89010,#e0c880,#fff"],
  ["Spm", "#000,#403020,#807050,#c8a030,#d8c080,#fff"],
  ["Gold", "#000,#301000,#703800,#b07800,#d8b020,#f8f070"],
  ["Bronze", "#000,#402008,#884808,#d07008,#ffa010,#f8b020"],
  ["Fire", "#000,#800808,#e00810,#ff2020,#ff9020,#fff050,#fff8c0"],
  ["Green Fields", "#084008,#108018,#20e020,#50f830,#b0f048,#f8f880"],
  ["Bordeaux", "#f80010,#e00810,#a81010,#801010,#b87870,#fff"],
  ["Magma", "#f8f020,#ffb010,#f07010,#703808,#000,#888,#fff"],
  ["Volcano", "#3038e0,#703098,#a82848,#f83010,#ff7010,#ffb010,#f8f020"],
  ["Aurora", "#ff6838,#d030a0,#9818c0,#5860e0,#28b8f0,#b8e0f8,#fff"],
  ["Fluo", "#08e010,#10b830,#208858,#286898,#7020c8,#d020e0,#f020f0"],
  ["Purple", "#fff,#d8c0d8,#b888b8,#9060a0,#481050"],
  ["White", "#fff,#fff"],
  ["Viridis", "#480858,#404088,#287890,#20a080,#78d050,#f0e820"]
];
document.getElementById("palettes").innerHTML = palettes.map(([name, stops]) =>
  `<button class="${name === "Gold" || name === "Viridis" ? "picked" : ""}"><i style="background-image:linear-gradient(90deg,${stops})"></i><span>${name}</span></button>`
).join("");

const v = "#3c1858,#284c84,#209088,#60c860";
const fills = ["linear-gradient(135deg,#1f6e88,#2a8f88,#1f6080,#2a8f88)", "#22688c", "#22688c", "#22688c", "#22688c",
  "#22688c", "#22688c", "#22688c", `linear-gradient(90deg,${v})`, `linear-gradient(300deg,${v})`,
  `linear-gradient(90deg,${v},#e8e030)`, `linear-gradient(0deg,${v},#d8e030)`, `linear-gradient(90deg,${v},#e8e030)`,
  `linear-gradient(0deg,${v},#f0f020)`, `linear-gradient(285deg,${v})`, "#285f94"];
document.getElementById("strip").innerHTML = fills.map(f => `<i style="background:${f}"></i>`).join("");

/* plot origin, pixels per 10 µm, and the extent of the image */
const x0 = 24, y0 = 307, unit = 29.05, size = 272;
let lines = `M${x0} ${y0}h${size}v-${size}h-${size}z`;
let texts = "";
for (let i = 0; i * unit / 5 <= size; i++) {
  const d = i * unit / 5, len = i % 5 ? 2 : 4;
  lines += `M${x0 + d} ${y0}v${len}M${x0 + d} ${y0 - size}v-${len}M${x0} ${y0 - d}h-${len}M${x0 + size} ${y0 - d}h${len}`;
  if (i % 5 === 0) {
    const n = i * 2;
    texts += `<text x="${x0 + d}" y="${y0 + 11}" text-anchor="middle">${n}</text>` +
      `<text x="${x0 - 7}" y="${y0 - d + 3}" text-anchor="end">${n}</text>`;
  }
}
texts += `<text x="292" y="${y0 + 11}">µm</text>`;
const barTop = 53, barStep = 26.17;
for (let i = -5; i <= 50; i++) {
  const y = barTop + i * barStep / 5;
  lines += `M332 ${y}h${i % 5 ? 2 : 4}`;
  if (i >= 0 && i % 5 === 0 && i < 50) texts += `<text x="338" y="${y + 3}">${(1 - i / 50).toFixed(1)}</text>`;
}
lines += "M332 22h5M332 319h5";
texts += `<text x="338" y="25">1.119</text><text x="338" y="322">-0.01525</text>`;
document.getElementById("axes").innerHTML = `<path d="${lines}" stroke="#333" stroke-width=".8" fill="none"/>${texts}`;
```
